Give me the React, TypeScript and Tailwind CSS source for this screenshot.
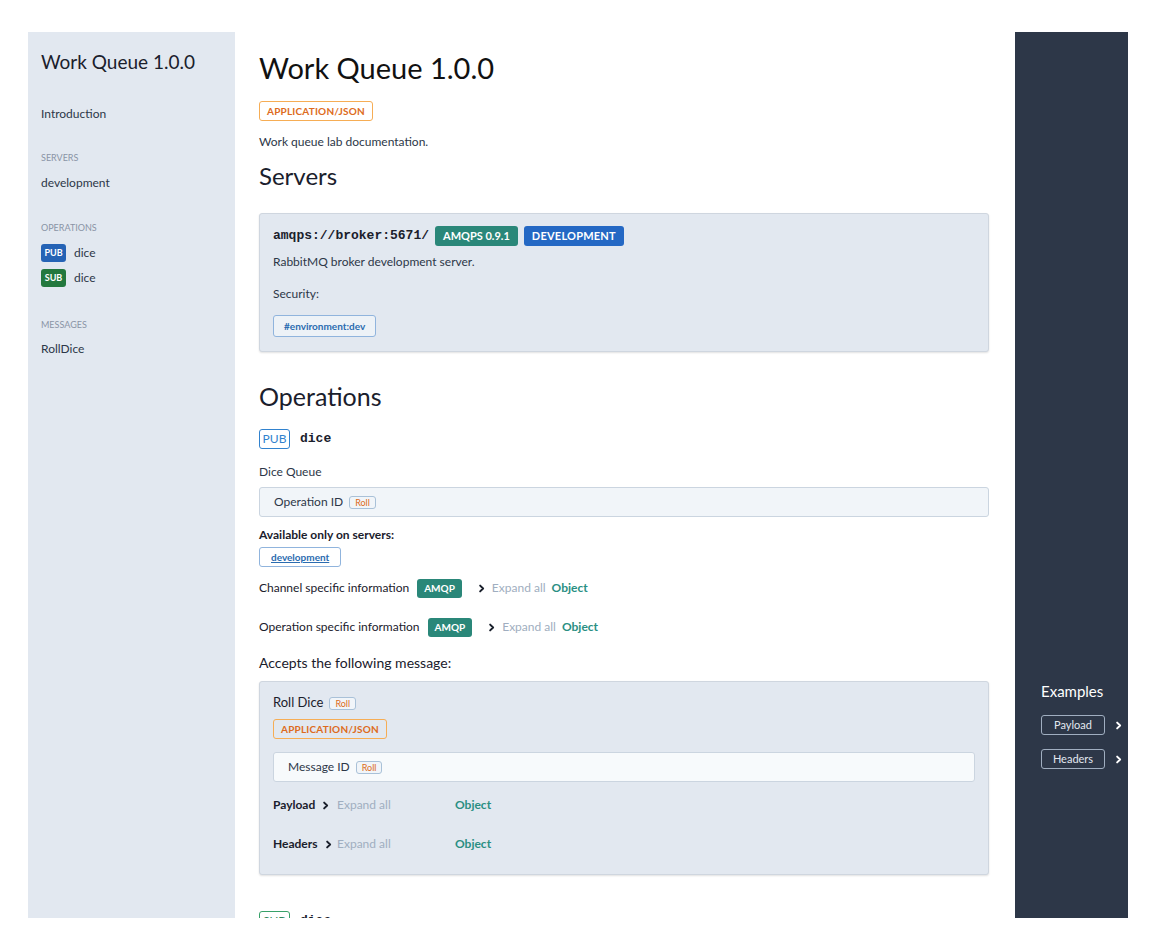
const SANS = "font-['Lato','Noto_Sans',sans-serif]";
const MONO = "font-['Liberation_Mono','DejaVu_Sans_Mono',monospace]";

function Chevron({ className = "" }: { className?: string }) {
  return (
    <svg viewBox="0 0 10 10" className={`w-[9px] h-[9px] ${className}`} fill="none" stroke="currentColor" strokeWidth="2.2" strokeLinecap="round" strokeLinejoin="round">
      <path d="M3.5 1.8 6.8 5 3.5 8.2" />
    </svg>
  );
}

function RollTag() {
  return (
    <span className="flex items-center h-[13px] px-[5px] rounded-[3px] border border-[#a9c1d8] bg-[#f1f5f9] text-[9px] leading-none text-[#dd6b20]">
      Roll
    </span>
  );
}

function ContentType({ className = "" }: { className?: string }) {
  return (
    <div className={`flex items-center justify-center w-[114px] h-[20px] rounded-[3px] border border-[#f6ad55] text-[10px] font-bold tracking-[0.02em] text-[#dd6b20] ${className}`}>
      APPLICATION/JSON
    </div>
  );
}

function BindingRow({ label, className = "" }: { label: string; className?: string }) {
  return (
    <div className={`flex items-center h-[20px] text-[12px] text-[#1a202c] ${className}`}>
      <span>{label}</span>
      <span className="ml-[8px] flex items-center h-[19px] px-[7px] rounded-[3px] bg-[#2a8779] text-white text-[10px] font-bold">
        AMQP
      </span>
      <Chevron className="ml-[15px] text-[#1a202c]" />
      <span className="ml-[6px] text-[#a0aec0]">Expand all</span>
      <span className="ml-[6px] font-bold text-[#2a8f83]">Object</span>
    </div>
  );
}

function SideHeading({ children, className = "" }: { children: string; className?: string }) {
  return <div className={`text-[9px] leading-[12px] uppercase text-[#8a94a6] ${className}`}>{children}</div>;
}

export default function App() {
  return (
    <div className={`min-h-screen bg-white pt-8 pl-7 pr-[22px] ${SANS}`}>
      <div className="flex h-[886px] overflow-hidden">
        {/* ── Sidebar ───────────────────────────── */}
        <aside className="w-[207px] shrink-0 bg-[#e2e8f0] pl-[13px] pt-[18px] text-[#2d3748]">
          <div className="text-[19px] leading-[24px] text-[#1a202c]">Work Queue 1.0.0</div>
          <div className="mt-[31px] text-[12px] leading-[18px]">Introduction</div>

          <SideHeading className="mt-[29px]">Servers</SideHeading>
          <div className="mt-[10px] text-[12px] leading-[18px]">development</div>

          <SideHeading className="mt-[30px]">Operations</SideHeading>
          <div className="mt-[10px] flex items-center gap-2 text-[12px]">
            <span className="flex items-center justify-center w-[25px] h-[18px] rounded-[3px] bg-[#2563b5] text-white text-[9px] font-bold">PUB</span>
            <span>dice</span>
          </div>
          <div className="mt-[7px] flex items-center gap-2 text-[12px]">
            <span className="flex items-center justify-center w-[25px] h-[18px] rounded-[3px] bg-[#23783e] text-white text-[9px] font-bold">SUB</span>
            <span>dice</span>
          </div>

          <SideHeading className="mt-[32px]">Messages</SideHeading>
          <div className="mt-[9px] text-[12px] leading-[18px]">RollDice</div>
        </aside>

        {/* ── Main + examples column ─────────────── */}
        <div className="flex flex-col flex-1">
          {/* row 1: info, servers, operation */}
          <div className="flex">
            <div className="w-[780px] pl-6 pr-[26px] pt-[19px] pb-[8px] text-[#2d3748]">
              <h1 className="text-[29px] leading-[34px] text-[#111]">Work Queue 1.0.0</h1>
              <ContentType className="mt-[16px]" />
              <p className="mt-[12px] text-[12px] leading-[18px]">Work queue lab documentation.</p>

              <h2 className="mt-[11px] text-[24px] leading-[28px] text-[#1a202c]">Servers</h2>
              <div className="mt-[23px] rounded-[3px] border border-[#cfd6df] bg-[#e2e8f0] shadow-[0_1px_2px_rgba(0,0,0,0.12)] px-[13px] pt-[12px] pb-[14px]">
                <div className="flex items-center h-[20px] gap-[6px]">
                  <span className={`${MONO} text-[13px] font-bold text-[#1a202c]`}>amqps://broker:5671/</span>
                  <span className="flex items-center h-[20px] px-[8px] rounded-[3px] bg-[#2a8779] text-white text-[11px] font-bold">AMQPS 0.9.1</span>
                  <span className="flex items-center h-[20px] px-[8px] rounded-[3px] bg-[#2468c4] text-white text-[11px] font-bold tracking-[0.02em]">DEVELOPMENT</span>
                </div>
                <p className="mt-[7px] text-[12px] leading-[18px]">RabbitMQ broker development server.</p>
                <p className="mt-[14px] text-[12px] leading-[18px]">Security:</p>
                <div className="mt-[12px] flex w-fit items-center h-[22px] px-[10px] rounded-[3px] border border-[#90b4dd] bg-[#edf2f7] text-[10px] font-bold text-[#2b6cb0]">
                  #environment:dev
                </div>
              </div>

              <h2 className="mt-[29px] text-[25px] leading-[30px] text-[#1a202c]">Operations</h2>
              <div className="mt-[18px] flex items-center gap-[10px]">
                <span className="flex items-center justify-center w-[31px] h-[20px] rounded-[3px] border border-[#3182ce] text-[12px] text-[#3182ce]">PUB</span>
                <span className={`${MONO} text-[13px] font-bold text-[#1a202c]`}>dice</span>
              </div>
              <p className="mt-[14px] text-[12px] leading-[18px]">Dice Queue</p>
              <div className="mt-[6px] h-[30px] flex items-center gap-[6px] px-[14px] rounded-[3px] border border-[#cbd5e0] bg-[#f1f5f9] text-[12px]">
                <span>Operation ID</span>
                <RollTag />
              </div>
              <p className="mt-[9px] text-[12px] leading-[18px] font-bold text-[#1a202c]">Available only on servers:</p>
              <div className="mt-[3px] flex w-fit items-center justify-center px-[11px] h-[20px] rounded-[3px] border border-[#90b4dd] bg-white text-[10px] font-bold underline text-[#2b6cb0]">
                development
              </div>
              <BindingRow className="mt-[11px]" label="Channel specific information" />
              <BindingRow className="mt-[19px]" label="Operation specific information" />
              <p className="mt-[16px] text-[14px] leading-[20px] text-[#1a202c]">Accepts the following message:</p>
            </div>
            <div className="w-[113px] bg-[#2d3748]" />
          </div>

          {/* row 2: message + examples */}
          <div className="flex">
            <div className="w-[780px] pl-6 pr-[26px] text-[#2d3748]">
              <div className="rounded-[3px] border border-[#cfd6df] bg-[#e2e8f0] shadow-[0_1px_2px_rgba(0,0,0,0.12)] px-[13px] pt-[12px] pb-[21px]">
                <div className="flex items-center gap-[6px] h-[18px]">
                  <span className="text-[13px] text-[#1a202c]">Roll Dice</span>
                  <RollTag />
                </div>
                <ContentType className="mt-[7px]" />
                <div className="mt-[13px] h-[30px] flex items-center gap-[6px] px-[14px] rounded-[3px] border border-[#cbd5e0] bg-[#f7fafc] text-[12px]">
                  <span>Message ID</span>
                  <RollTag />
                </div>
                <div className="mt-[14px] flex items-center h-[18px] text-[12px]">
                  <span className="w-[64px] flex items-center gap-[6px] font-bold text-[#1a202c]">Payload<Chevron /></span>
                  <span className="w-[118px] text-[#a0aec0]">Expand all</span>
                  <span className="font-bold text-[#2a8f83]">Object</span>
                </div>
                <div className="mt-[21px] flex items-center h-[18px] text-[12px]">
                  <span className="w-[64px] flex items-center gap-[6px] font-bold text-[#1a202c]">Headers<Chevron /></span>
                  <span className="w-[118px] text-[#a0aec0]">Expand all</span>
                  <span className="font-bold text-[#2a8f83]">Object</span>
                </div>
              </div>
            </div>
            <div className="w-[113px] bg-[#2d3748] pl-[26px] text-white">
              <div className="text-[15px] leading-[20px]">Examples</div>
              {["Payload", "Headers"].map((label) => (
                <div key={label} className="mt-[14px] flex items-center gap-[9px]">
                  <span className="flex items-center justify-center w-[64px] h-[20px] rounded-[3px] border border-[#a0aec0] text-[11px] text-[#e2e8f0]">
                    {label}
                  </span>
                  <Chevron className="text-white" />
                </div>
              ))}
            </div>
          </div>

          {/* row 3: next operation (cut off) */}
          <div className="flex flex-1">
            <div className="w-[780px] pl-6 pr-[26px] pt-[36px]">
              <div className="flex items-center gap-[10px]">
                <span className="flex items-center justify-center w-[31px] h-[20px] rounded-[3px] border border-[#38a169] text-[12px] text-[#2f855a]">SUB</span>
                <span className={`${MONO} text-[13px] font-bold text-[#1a202c]`}>dice</span>
              </div>
            </div>
            <div className="w-[113px] bg-[#2d3748]" />
          </div>
        </div>
      </div>
    </div>
  );
}
